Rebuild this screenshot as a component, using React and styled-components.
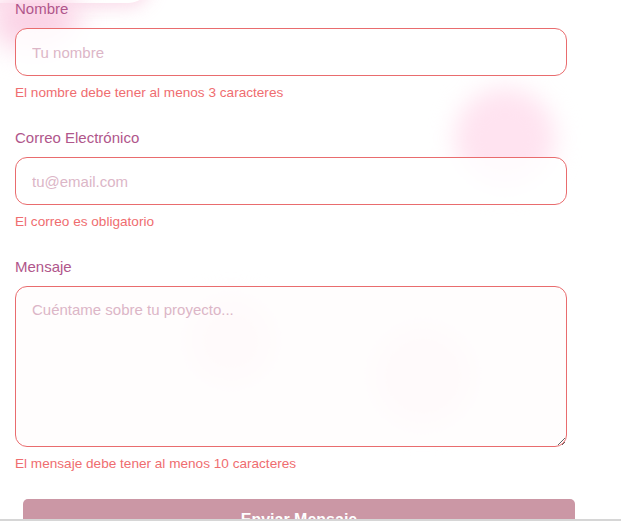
import styled, { createGlobalStyle } from "styled-components";

const GlobalStyle = createGlobalStyle`
  html, body {
    margin: 0;
    padding: 0;
    background: #ffffff;
    font-family: "Liberation Sans", Arial, sans-serif;
    overflow: hidden;
  }
`;

const Page = styled.div`
  position: relative;
  height: 521px;
  overflow: hidden;
  background: #ffffff;
`;

const Blob = styled.div`
  position: absolute;
  border-radius: 50%;
  background: ${(p) => p.color};
  filter: blur(${(p) => p.blur}px);
  pointer-events: none;
`;

const TopCard = styled.div`
  position: absolute;
  top: -40px;
  left: -20px;
  width: 170px;
  height: 43px;
  border-radius: 22px;
  background: #ffffff;
  box-shadow: 0 4px 18px rgba(245, 170, 205, 0.45);
`;

const Form = styled.form`
  position: relative;
  display: flex;
  flex-direction: column;
  padding: 0 54px 0 15px;
`;

const Group = styled.div`
  display: flex;
  flex-direction: column;
  margin-bottom: ${(p) => (p.last ? 27 : 28)}px;
`;

const Label = styled.label`
  font-size: 15px;
  line-height: 18px;
  color: #b0568b;
  margin-bottom: 10px;
`;

const fieldStyles = `
  box-sizing: border-box;
  width: 552px;
  border: 1px solid #e96c6e;
  border-radius: 12px;
  font-family: "Liberation Sans", Arial, sans-serif;
  font-size: 15px;
  color: #6b3a55;
  outline: none;
  &::placeholder {
    color: #dcb6c7;
  }
`;

const Input = styled.input`
  ${fieldStyles}
  height: 48px;
  padding: 0 16px;
  background: rgba(255, 255, 255, 0.85);
`;

const TextArea = styled.textarea`
  ${fieldStyles}
  display: block;
  height: 161px;
  padding: 14px 16px;
  resize: vertical;
  background: rgba(255, 252, 253, 0.8);
`;

const ErrorText = styled.span`
  margin-top: 8px;
  font-size: 13.6px;
  line-height: 17px;
  color: #ef6d70;
`;

const SubmitButton = styled.button`
  box-sizing: border-box;
  width: 552px;
  margin-left: 8px;
  height: 48px;
  border: none;
  border-radius: 5px;
  background: #cb97a5;
  color: #ffffff;
  font-family: "Liberation Sans", Arial, sans-serif;
  font-size: 16px;
  font-weight: bold;
  padding: 0 0 6px;
  cursor: pointer;
`;

const BottomRule = styled.div`
  position: fixed;
  left: 0;
  right: 0;
  bottom: 0;
  height: 2px;
  background: #d6d6d6;
`;

const App = () => {
  return (
    <Page>
      <GlobalStyle />
      <TopCard />
      <Blob color="#fbd3e6" blur={14} style={{ left: -10, top: -10, width: 90, height: 60 }} />
      <Blob color="#ffe3f0" blur={12} style={{ left: 455, top: 88, width: 100, height: 100 }} />
      <Blob color="#fff0f5" blur={12} style={{ left: 188, top: 298, width: 86, height: 86 }} />
      <Blob color="#ffedf3" blur={14} style={{ left: 375, top: 328, width: 96, height: 96 }} />
      <Form onSubmit={(e) => e.preventDefault()}>
        <Group>
          <Label htmlFor="nombre">Nombre</Label>
          <Input id="nombre" placeholder="Tu nombre" />
          <ErrorText>El nombre debe tener al menos 3 caracteres</ErrorText>
        </Group>
        <Group>
          <Label htmlFor="correo">Correo Electrónico</Label>
          <Input id="correo" type="email" placeholder="tu@email.com" />
          <ErrorText>El correo es obligatorio</ErrorText>
        </Group>
        <Group last>
          <Label htmlFor="mensaje">Mensaje</Label>
          <TextArea id="mensaje" placeholder="Cuéntame sobre tu proyecto..." />
          <ErrorText>El mensaje debe tener al menos 10 caracteres</ErrorText>
        </Group>
        <SubmitButton type="submit">Enviar Mensaje</SubmitButton>
      </Form>
      <BottomRule />
    </Page>
  );
};

export default App;
